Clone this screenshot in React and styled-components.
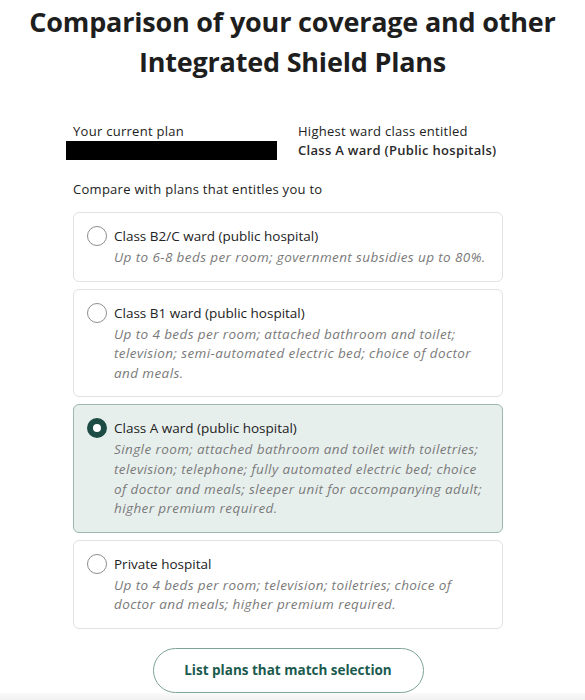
import React, { useState } from "react";
import styled, { createGlobalStyle } from "styled-components";

const Global = createGlobalStyle`
  html, body { margin: 0; padding: 0; background: #ffffff; }
  body { font-family: "Open Sans", "Noto Sans", sans-serif; color: #222; }
  * { box-sizing: border-box; }
`;

const Page = styled.div`
  position: relative;
  width: 585px;
  height: 700px;
  overflow: hidden;
  display: flex;
  flex-direction: column;
`;

const Title = styled.h1`
  margin: 2px 0 0;
  font-size: 27px;
  line-height: 40px;
  font-weight: 700;
  text-align: center;
  color: #1e1e1e;
  letter-spacing: -0.2px;
`;

const Content = styled.div`
  width: 430px;
  margin: 40px 0 0 73px;
  display: flex;
  flex-direction: column;
`;

const InfoGrid = styled.div`
  display: grid;
  grid-template-columns: 225px 1fr;
`;

const InfoCol = styled.div`
  display: flex;
  flex-direction: column;
`;

const Label = styled.div`
  font-size: 13px;
  line-height: 19px;
  letter-spacing: 0.28px;
  color: #222;
`;

const Value = styled.div`
  font-size: 13px;
  line-height: 19px;
  font-weight: 600;
  letter-spacing: 0.3px;
  color: #2a2a2a;
`;

const Redacted = styled.div`
  margin-left: -7px;
  width: 211px;
  height: 19px;
  background: #000;
`;

const Prompt = styled.div`
  margin-top: 20px;
  font-size: 13px;
  line-height: 19px;
  letter-spacing: 0.28px;
  color: #222;
`;

const Options = styled.div`
  margin-top: 13px;
  display: flex;
  flex-direction: column;
  gap: 7px;
`;

const Card = styled.label`
  display: grid;
  grid-template-columns: 20px 1fr;
  column-gap: 7px;
  padding: 13px 10px 13px 13px;
  border-radius: 6px;
  border: 1px solid ${(p) => (p.$selected ? "#9cb8b1" : "#dfe3e2")};
  background: ${(p) => (p.$selected ? "#e7efed" : "#ffffff")};
  cursor: pointer;
`;

const Radio = styled.span`
  width: 20px;
  height: 20px;
  border-radius: 50%;
  border: ${(p) => (p.$checked ? "6px solid #1d4c45" : "1px solid #8e8e8e")};
  background: #fff;
`;

const CardText = styled.div`
  display: flex;
  flex-direction: column;
  gap: 2px;
`;

const CardTitle = styled.div`
  font-size: 13.5px;
  line-height: 20px;
  color: #222;
`;

const CardDesc = styled.div`
  font-size: 13.5px;
  line-height: 19.6px;
  letter-spacing: 0.4px;
  font-style: italic;
  color: #7a7a7a;
`;

const Button = styled.button`
  align-self: center;
  margin-top: 19px;
  width: 271px;
  height: 45px;
  border-radius: 23px;
  border: 1px solid #7ea39b;
  background: #fff;
  color: #1b5a4e;
  font-family: inherit;
  font-size: 13.5px;
  font-weight: 700;
  cursor: pointer;
`;

const FooterShade = styled.div`
  position: absolute;
  left: 0;
  right: 0;
  bottom: 0;
  height: 7px;
  background: linear-gradient(#fafafa, #f1f1f1);
`;

const options = [
  {
    title: "Class B2/C ward (public hospital)",
    desc: "Up to 6-8 beds per room; government subsidies up to 80%.",
  },
  {
    title: "Class B1 ward (public hospital)",
    desc: "Up to 4 beds per room; attached bathroom and toilet; television; semi-automated electric bed; choice of doctor and meals.",
  },
  {
    title: "Class A ward (public hospital)",
    desc: "Single room; attached bathroom and toilet with toiletries; television; telephone; fully automated electric bed; choice of doctor and meals; sleeper unit for accompanying adult; higher premium required.",
  },
  {
    title: "Private hospital",
    desc: "Up to 4 beds per room; television; toiletries; choice of doctor and meals; higher premium required.",
  },
];

export default function App() {
  const [selected, setSelected] = useState(2);
  return (
    <Page>
      <Global />
      <Title>
        Comparison of your coverage and other
        <br />
        Integrated Shield Plans
      </Title>
      <Content>
        <InfoGrid>
          <InfoCol>
            <Label>Your current plan</Label>
            <Redacted />
          </InfoCol>
          <InfoCol>
            <Label>Highest ward class entitled</Label>
            <Value>Class A ward (Public hospitals)</Value>
          </InfoCol>
        </InfoGrid>
        <Prompt>Compare with plans that entitles you to</Prompt>
        <Options>
          {options.map((o, i) => (
            <Card key={o.title} $selected={selected === i} onClick={() => setSelected(i)}>
              <Radio $checked={selected === i} />
              <CardText>
                <CardTitle>{o.title}</CardTitle>
                <CardDesc>{o.desc}</CardDesc>
              </CardText>
            </Card>
          ))}
        </Options>
        <Button>List plans that match selection</Button>
      </Content>
      <FooterShade />
    </Page>
  );
}
